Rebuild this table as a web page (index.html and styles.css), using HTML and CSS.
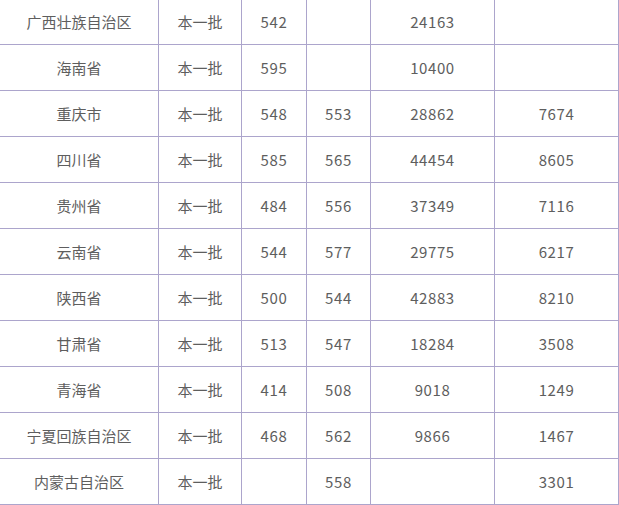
FILE: index.html
```html
<!DOCTYPE html>
<html lang="zh">
<head>
<meta charset="utf-8">
<link rel="stylesheet" href="styles.css">
</head>
<body>
<table class="score">
<colgroup>
<col class="c1"><col class="c2"><col class="c3"><col class="c4"><col class="c5"><col class="c6">
</colgroup>
<tbody>
<tr><td>广西壮族自治区</td><td>本一批</td><td>542</td><td></td><td>24163</td><td></td></tr>
<tr><td>海南省</td><td>本一批</td><td>595</td><td></td><td>10400</td><td></td></tr>
<tr><td>重庆市</td><td>本一批</td><td>548</td><td>553</td><td>28862</td><td>7674</td></tr>
<tr><td>四川省</td><td>本一批</td><td>585</td><td>565</td><td>44454</td><td>8605</td></tr>
<tr><td>贵州省</td><td>本一批</td><td>484</td><td>556</td><td>37349</td><td>7116</td></tr>
<tr><td>云南省</td><td>本一批</td><td>544</td><td>577</td><td>29775</td><td>6217</td></tr>
<tr><td>陕西省</td><td>本一批</td><td>500</td><td>544</td><td>42883</td><td>8210</td></tr>
<tr><td>甘肃省</td><td>本一批</td><td>513</td><td>547</td><td>18284</td><td>3508</td></tr>
<tr><td>青海省</td><td>本一批</td><td>414</td><td>508</td><td>9018</td><td>1249</td></tr>
<tr><td>宁夏回族自治区</td><td>本一批</td><td>468</td><td>562</td><td>9866</td><td>1467</td></tr>
<tr><td>内蒙古自治区</td><td>本一批</td><td></td><td>558</td><td></td><td>3301</td></tr>
</tbody>
</table>
</body>
</html>
```
FILE: styles.css
```css
html, body {
  margin: 0;
  padding: 0;
  background: #ffffff;
}
body {
  overflow: hidden;
}
.score {
  border-collapse: collapse;
  table-layout: fixed;
  width: 619px;
  margin: -2px 0 0 -1px;
  font-family: "Noto Sans CJK SC", "Noto Sans", sans-serif;
  font-size: 15px;
  color: #5e5e5e;
}
.c1 { width: 159px; }
.c2 { width: 83px; }
.c3 { width: 65px; }
.c4 { width: 64px; }
.c5 { width: 124px; }
.c6 { width: 124px; }
.score td {
  border: 1px solid #aca5cc;
  height: 46px;
  padding: 0;
  text-align: center;
  vertical-align: middle;
  box-sizing: border-box;
  line-height: 20px;
}
.score td:nth-child(n+3) {
  letter-spacing: 0.6px;
}
```
